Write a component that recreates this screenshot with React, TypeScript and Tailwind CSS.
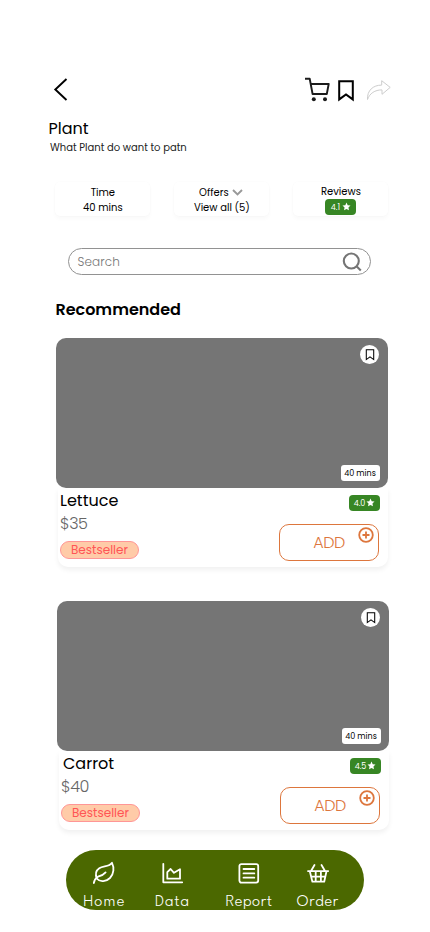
import React from 'react';

const products = [
  { name: 'Lettuce', price: '$35', rating: '4.0', time: '40 mins', place: 'ml-[56px] mt-[16px]', title: '' },
  { name: 'Carrot', price: '$40', rating: '4.5', time: '40 mins', place: 'ml-[57px] mt-[34px]', title: 'pl-[2px]' }
];

const Star = () => (
  <svg className="w-[9px] h-[9px] -mt-px shrink-0" viewBox="0 0 24 24" fill="#fff">
    <path d="M12 1.5l3.2 6.9 7.5.9-5.5 5.2 1.4 7.5L12 18.4 5.4 22l1.4-7.5L1.3 9.3l7.5-.9z" />
  </svg>
);

const Rating = ({ value, gap = 'gap-[1px]' }: { value: string; gap?: string }) => (
  <span className={'w-[31px] h-4 rounded-[4px] bg-[#378624] text-white text-[8px] leading-4 flex items-center justify-center ' + gap}>
    <span className="mt-px">{value}</span>
    <Star />
  </span>
);

const CartIcon = () => (
  <svg className="w-[26px] h-[26px]" viewBox="0 0 26 26" fill="none" stroke="#1c1c1c" strokeWidth="1.9">
    <path d="M1 1.7H5.7L8.6 17H22.8L24.7 7H6.8" strokeLinejoin="round" />
    <circle cx="9.8" cy="22.2" r="2" fill="#1c1c1c" stroke="none" />
    <circle cx="21" cy="22.2" r="2" fill="#1c1c1c" stroke="none" />
  </svg>
);

const BookmarkIcon = ({ className, width }: { className: string; width: number }) => (
  <svg className={className} viewBox="0 0 16 22" fill="none" stroke="#000" strokeWidth={width}>
    <path d="M1.2 1.3H14.8V19.4L8 14.4L1.2 19.4Z" />
  </svg>
);

const ShareIcon = () => (
  <svg className="w-[26px] h-[22px]" viewBox="0 0 26 22" fill="none" stroke="#cdcdcd" strokeWidth="1">
    <path d="M1.5 20.5C1 11.5 7 6.1 15.7 6.1V1.7L24.2 8.4L16 15.3V10.9C9 10.8 3.5 14.5 1.5 20.5Z" strokeLinejoin="round" />
  </svg>
);

const LeafIcon = () => (
  <svg className="w-6 h-6" viewBox="0 0 24 24" fill="none" stroke="#fff" strokeWidth="1.8" strokeLinecap="round" strokeLinejoin="round">
    <path d="M20 1.8C17.5 6 11 4.8 7.3 7.3C3.7 9.7 3.3 14 5 17.8C8 21.5 14.5 20.5 18 17C22 13 22.3 6.5 20 1.8Z" />
    <path d="M1.8 22C2.3 19 3.8 17 6 15.7C9.5 14.8 12 13.3 13.6 11.4" />
  </svg>
);

const DataIcon = () => (
  <svg className="w-6 h-6" viewBox="0 0 24 24" fill="none" stroke="#fff" strokeWidth="1.8" strokeLinecap="round" strokeLinejoin="round">
    <path d="M3.3 2.8V21.3H22.2" />
    <path d="M7.3 17.7V11.2L10.6 8L14 11.8L20 8.3V17.7Z" />
  </svg>
);

const ReportIcon = () => (
  <svg className="w-6 h-6" viewBox="0 0 24 24" fill="none" stroke="#fff" strokeWidth="1.8" strokeLinecap="round">
    <rect x="2.4" y="3.1" width="18.8" height="18.5" rx="2" />
    <path d="M6.5 8H17.3M6.5 12.4H17.3M6.5 16.7H17.3" />
  </svg>
);

const BasketIcon = () => (
  <svg className="w-6 h-6" viewBox="0 0 24 24" fill="none" stroke="#fff" strokeWidth="1.8" strokeLinecap="round" strokeLinejoin="round">
    <path d="M8.5 4L5 10M15.5 4L19 10M2 10.1H22.2M3.8 10.2L6.4 20.7H18.2L20.5 10.2M5.2 15.6H19.2M9.7 10.3V20.5M14.9 10.3V20.5" />
  </svg>
);

const navItems = [
  { icon: LeafIcon, label: 'Home', box: 'w-[42px]', tracking: 'tracking-[1.1px]' },
  { icon: DataIcon, label: 'Data', box: 'w-[34px] ml-[30px]', tracking: 'tracking-[0.8px]' },
  { icon: ReportIcon, label: 'Report', box: 'w-[47px] ml-[36px]', tracking: 'tracking-[0.5px]' },
  { icon: BasketIcon, label: 'Order', box: 'w-[43px] ml-[24px]', tracking: 'tracking-[0.7px]' }
];

const infoCard = 'w-[95px] h-[34px] rounded-[5px] bg-white shadow-[0_3px_4px_rgba(0,0,0,0.025),0_0_2px_rgba(0,0,0,0.03)] flex flex-col items-center text-[10px] leading-[15px]';

const App = () => {
  return (
    <div className="w-[430px] h-[932px] bg-white overflow-hidden flex flex-col font-['Poppins','Inter',sans-serif] text-black">
      {/* Header */}
      <header className="h-[26px] mt-[77px] pl-[53px] pr-[38px] flex items-start shrink-0">
        <svg className="w-4 h-[26px]" viewBox="0 0 16 26" fill="none" stroke="#000" strokeWidth="1.9">
          <path d="M13.5 2L2.3 12.5L13.5 23" />
        </svg>
        <div className="ml-auto flex items-start">
          <CartIcon />
          <BookmarkIcon className="w-4 h-[22px] ml-2 mt-[3px]" width={2} />
          <div className="ml-3 mt-[2px]">
            <ShareIcon />
          </div>
        </div>
      </header>
      <h1 className="ml-[48.5px] mt-[14px] text-base leading-6 shrink-0">Plant</h1>
      <p className="ml-[50px] text-[10px] leading-[14px] text-[#222] shrink-0">What Plant do want to patn</p>

      {/* Info cards */}
      <div className="mt-[27px] ml-[55.4px] flex gap-6 shrink-0">
        <div className={infoCard + ' pt-[3px]'}>
          <span>Time</span>
          <span>40 mins</span>
        </div>
        <div className={infoCard + ' pt-[3px]'}>
          <span className="flex items-center gap-[3px] -ml-[2px]">
            Offers
            <svg className="w-[11px] h-[7px]" viewBox="0 0 11 7" fill="none" stroke="#999" strokeWidth="1.9">
              <path d="M1 1L5.5 5.5L10 1" />
            </svg>
          </span>
          <span>View all (5)</span>
        </div>
        <div className={infoCard + ' pt-[2px]'}>
          <span>Reviews</span>
          <Rating value="4.1" gap="gap-[2px]" />
        </div>
      </div>

      {/* Search */}
      <div className="mt-8 ml-[68px] w-[303px] h-[27px] rounded-full border border-[#929292] flex items-center justify-between pl-[8.5px] pr-[8.5px] shrink-0">
        <span className="text-xs font-light text-[#777] tracking-[0.1px]">Search</span>
        <svg className="w-5 h-5" viewBox="0 0 20 20" fill="none" stroke="#757575" strokeWidth="2.1">
          <circle cx="9.3" cy="9" r="7.5" />
          <path d="M14.5 14.3L18.8 18.4" />
        </svg>
      </div>

      <h2 className="ml-[55.4px] mt-[23px] text-base leading-6 font-semibold shrink-0">Recommended</h2>

      {/* Products */}
      {products.map((product) => (
        <article key={product.name} className={'w-[332px] shrink-0 ' + product.place}>
          <div className="h-[150px] rounded-[10px] bg-[#757575] flex flex-col items-end justify-between pt-[7px] pr-[9px] pb-[7px] relative">
            <span className="w-[19px] h-[19px] rounded-full bg-white flex items-center justify-center">
              <BookmarkIcon className="w-[10px] h-3" width={1.9} />
            </span>
            <span className="w-[39px] h-4 -mr-px pr-px rounded-[3px] bg-white text-[8px] leading-[17px] text-center">{product.time}</span>
          </div>
          <div className="h-[79px] ml-[2px] rounded-b-[10px] shadow-[0_3px_5px_rgba(0,0,0,0.06)] pl-[2px] pr-[9px] flex justify-between">
            <div>
              <h3 className={'mt-[1px] text-base leading-6 ' + product.title}>{product.name}</h3>
              <p className="text-base leading-[22px] font-light text-[#666] tracking-[-0.4px]">{product.price}</p>
              <span className="mt-[6px] w-[79px] h-[18px] rounded-full border border-[#ff9696] bg-[#ffcba8] text-[#ff5555] text-xs leading-4 flex justify-center">
                Bestseller
              </span>
            </div>
            <div className="flex flex-col items-end">
              <div className="mt-[7px] -mr-px">
                <Rating value={product.rating} />
              </div>
              <button className="mt-[13px] w-[100px] h-[37px] rounded-[10px] border border-[#dd763d] text-[#dd763d] text-base font-light flex items-center justify-center relative">
                <span className="mt-px tracking-[-0.5px]">ADD</span>
                <svg className="w-4 h-4 absolute right-[4px] top-[2px]" viewBox="0 0 16 16" fill="none" stroke="#dd763d" strokeWidth="1.8">
                  <circle cx="8" cy="8" r="6.8" />
                  <path d="M8 4.5V11.5M4.5 8H11.5" strokeWidth="1.8" />
                </svg>
              </button>
            </div>
          </div>
        </article>
      ))}

      {/* Bottom navigation */}
      <nav className="mt-5 ml-[66px] w-[298px] h-[60px] rounded-full bg-[#4b6800] pl-[17px] flex font-['League_Spartan','Jost',sans-serif] font-light text-white overflow-hidden shrink-0">
        {navItems.map((item) => (
          <div key={item.label} className={'flex flex-col items-center pt-[11px] ' + item.box}>
            <item.icon />
            <span className={'mt-[9px] -mr-[0.8px] text-[16.5px] leading-4 whitespace-nowrap ' + item.tracking}>{item.label}</span>
          </div>
        ))}
      </nav>
    </div>
  );
};

export default App;
